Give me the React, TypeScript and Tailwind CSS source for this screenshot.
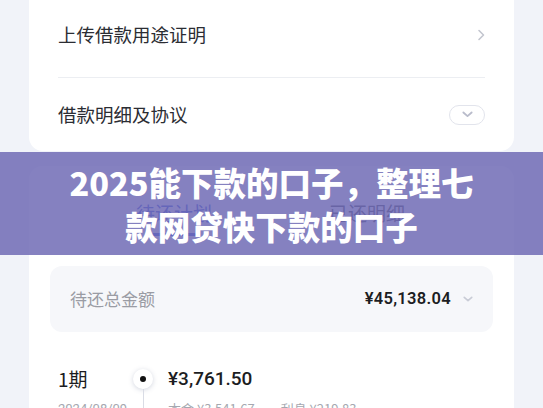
const cjk = { fontFamily: '"Noto Sans CJK SC", "Noto Sans", sans-serif' };
const num = { fontFamily: 'Roboto, "Noto Sans CJK SC", sans-serif' };

function ChevronRight() {
  return (
    <svg width="8" height="12" viewBox="0 0 8 12" fill="none" stroke="#c3c6cf" strokeWidth={1.6}>
      <path d="M2 1.5l4.5 4.5L2 10.5" strokeLinecap="round" strokeLinejoin="round" />
    </svg>
  );
}

function ChevronDown({ color = '#b9bccb', w = 12 }: { color?: string; w?: number }) {
  return (
    <svg width={w} height={w * 0.6} viewBox="0 0 12 7" fill="none" stroke={color} strokeWidth={2}>
      <path d="M1.5 1.5L6 5.5l4.5-4" strokeLinecap="round" strokeLinejoin="round" />
    </svg>
  );
}

export default function App() {
  return (
    <div className="relative h-[408px] w-[543px] overflow-hidden bg-[#f1f3f9]" style={cjk}>
      {/* top card */}
      <div className="mx-[29px] -mt-[3px] rounded-b-[14px] bg-white px-[29px]">
        <div className="flex h-[80px] items-center justify-between pb-[4px]">
          <span className="text-[18.5px] text-[#2b2d33]">上传借款用途证明</span>
          <ChevronRight />
        </div>
        <div className="h-px bg-[#eceef2]" />
        <div className="flex h-[73px] items-center justify-between">
          <span className="text-[18.5px] text-[#2b2d33]">借款明细及协议</span>
          <div className="flex h-[20px] w-[36px] items-center justify-center rounded-full border border-[#e2e4ec] bg-white">
            <ChevronDown w={11} />
          </div>
        </div>
      </div>

      {/* repayment card */}
      <div className="mx-[29px] mt-[15px] rounded-t-[14px] bg-white pb-10">
        <div className="flex pl-[106px] pt-[36px]">
          <div className="flex w-[78px] flex-col items-center">
            <span className="text-[19px] leading-[22px] text-[#3b57d6]">待还计划</span>
            <div className="mt-[9px] h-[3px] w-[44px] rounded-full bg-[#3b57d6]" />
          </div>
          <span className="ml-[116px] text-[19px] leading-[22px] text-[#4a4d57]">已还明细</span>
        </div>

        <div className="mx-[21px] mt-[30px] flex h-[66px] items-center justify-between rounded-[12px] bg-[#f6f7fa] pl-[20px] pr-[20px]">
          <span className="text-[17px] text-[#9a9ca4]">待还总金额</span>
          <div className="flex items-center gap-[12px]">
            <span className="text-[16.5px] font-semibold tracking-[0.3px] text-[#1c1d22]" style={num}>
              ¥45,138.04
            </span>
            <ChevronDown color="#c9ccd6" w={10} />
          </div>
        </div>

        <div className="mt-[35px] flex px-[29px]">
          <div className="flex w-[75px] flex-col">
            <span className="text-[19px] leading-[24px] text-[#1c1d22]">1期</span>
            <span className="mt-[10px] text-[13px] leading-[16px] text-[#a5a8b0]" style={num}>2024/08/09</span>
          </div>
          <div className="flex w-[20px] flex-col items-center">
            <div className="mt-[2px] flex h-[20px] w-[20px] items-center justify-center rounded-full bg-white shadow-[0_1px_5px_rgba(80,90,130,0.25)]">
              <div className="h-[6px] w-[6px] rounded-full bg-[#111]" />
            </div>
            <div className="h-[40px] w-px bg-[#d9dce5]" />
          </div>
          <div className="ml-[15px] flex flex-col">
            <span className="text-[19px] font-medium leading-[24px] text-[#1c1d22]" style={num}>
              ¥3,761.50
            </span>
            <span className="mt-[10px] text-[13px] leading-[16px] text-[#a5a8b0]">本金 ¥3,541.67　　利息 ¥219.83</span>
          </div>
        </div>
      </div>

      {/* title banner */}
      <div className="absolute inset-x-0 top-[152px] flex h-[103px] flex-col items-center justify-center bg-[rgba(110,105,180,0.84)]">
        <span className="text-[32.5px] font-black leading-[44px] text-white">2025能下款的口子，整理七</span>
        <span className="text-[32.5px] font-black leading-[44px] text-white">款网贷快下款的口子</span>
      </div>
    </div>
  );
}
